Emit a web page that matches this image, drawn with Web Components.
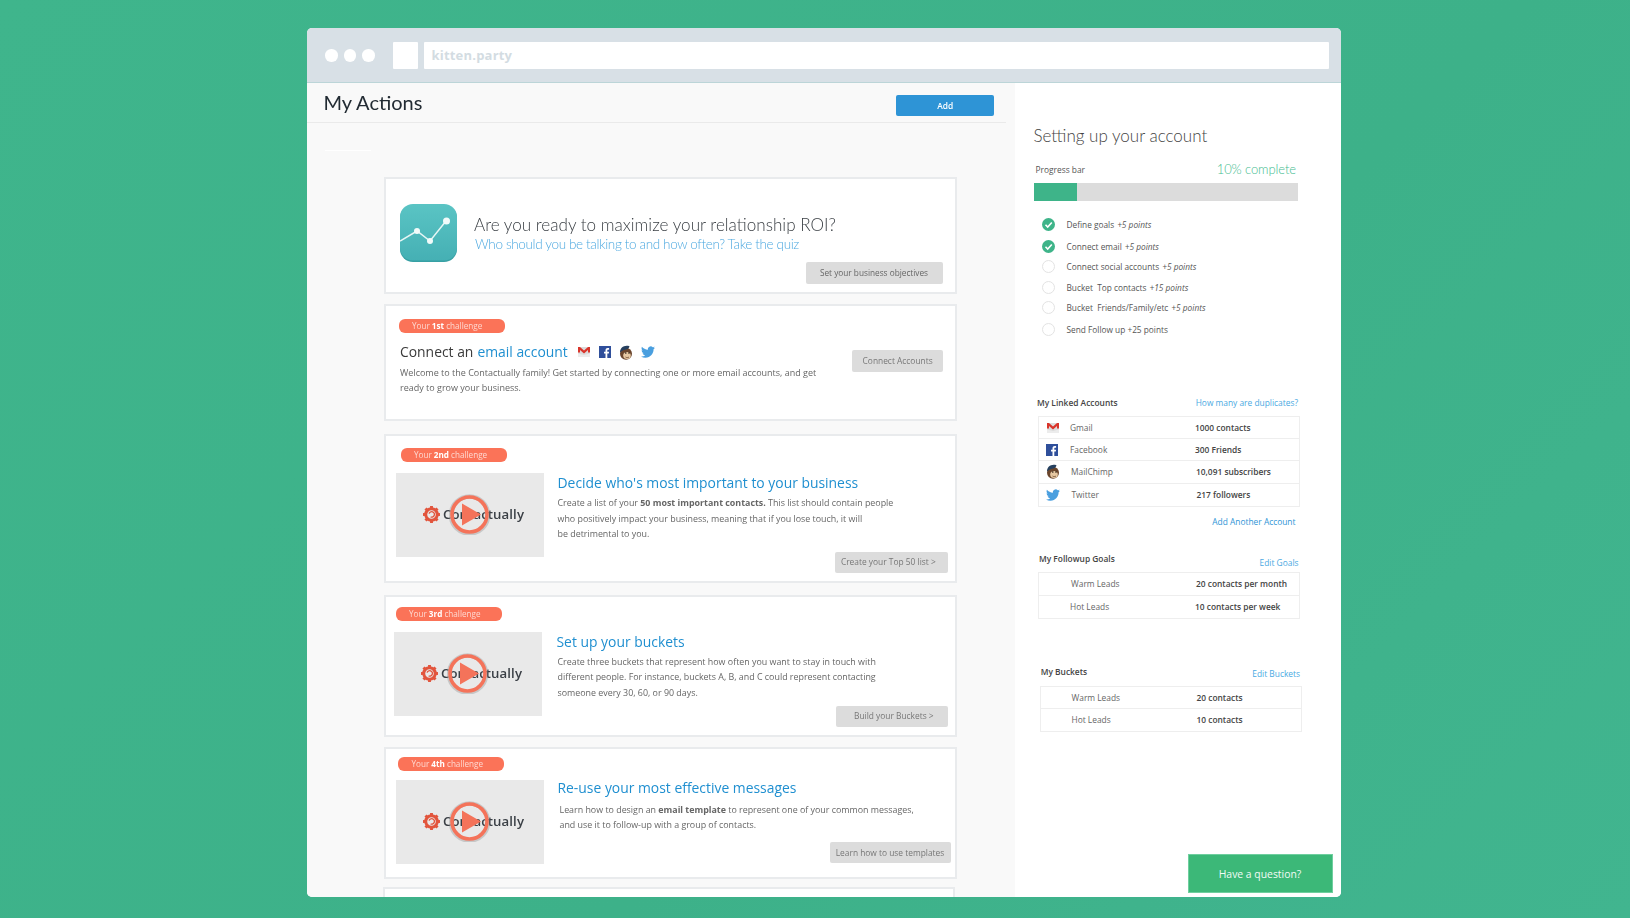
<!DOCTYPE html>
<html lang="en"><head><meta charset="utf-8"><title>My Actions</title>
<style>
html,body{margin:0;height:918px;overflow:hidden;background:linear-gradient(135deg,#3fb58c,#3db189 60%,#41b58f);font-family:"Open Sans",sans-serif}
</style></head><body>
<browser-window url="kitten.party">
  <actions-pane slot="main">
    <goal-card></goal-card>
    <connect-card></connect-card>
    <challenge-card ord="2nd" cta="Create your Top 50 list &gt;" style="--mt:13px;--h:149.3px;--pt:12.3px;--bx:15px;--vx:10.5px;--vy:1px;--gap:13.5px;--hy:1px;--by:2.3px;--bl:0px;--cy:10.7px;--cr:6.7px;--cw:113px;--cpr:6px">
      <span slot="title">Decide who's most important to your business</span>
      Create a list of your <b>50 most important contacts.</b> This list should contain people<br>who positively impact your business, meaning that if you lose touch, it will<br>be detrimental to you.
    </challenge-card>
    <challenge-card ord="3rd" cta="Build your Buckets &gt;" style="--mt:11.7px;--h:142.3px;--pt:10.3px;--bx:10px;--vx:8.5px;--vy:1px;--gap:14.5px;--hy:1px;--by:2px;--bl:1px;--cy:6px;--cr:6.7px;--cw:112px;--cpl:4px">
      <span slot="title">Set up your buckets</span>
      Create three buckets that represent how often you want to stay in touch with<br>different people. For instance, buckets A, B, and C could represent contacting<br>someone every 30, 60, or 90 days.
    </challenge-card>
    <challenge-card ord="4th" cta="Learn how to use templates" style="--mt:10px;--h:132px;--pt:8px;--bx:12.5px;--vx:10.5px;--vy:2px;--vg:7px;--gap:13.5px;--by:4px;--bl:2px;--cy:9.4px;--cr:4px;--cw:121px">
      <span slot="title">Re-use your most effective messages</span>
      Learn how to design an <b>email template</b> to represent one of your common messages,<br>and use it to follow-up with a group of contacts.
    </challenge-card>
    <empty-card></empty-card>
  </actions-pane>
  <setup-pane slot="side">
    <check-item done gap="13" text="Define goals" pts="+5 points"></check-item>
    <check-item done gap="2.5" text="Connect email" pts="+5 points"></check-item>
    <check-item gap="0" text="Connect social accounts" pts="+5 points"></check-item>
    <check-item gap="0.5" text="Bucket&nbsp; Top contacts" pts="+15 points"></check-item>
    <check-item gap="0.5" text="Bucket&nbsp; Friends/Family/etc" pts="+5 points"></check-item>
    <check-item gap="1.5" text="Send Follow up +25 points"></check-item>
    <section-head slot="tables" label="My Linked Accounts" link="How many are duplicates?" style="--sm:57px;--sl:22px;--sw:261px"></section-head>
    <info-table slot="tables" style="--tt:6px;--tl:23px">
      <info-row icon="gmail" name="Gmail" value="1000 contacts"></info-row>
      <info-row icon="fb" name="Facebook" value="300 Friends"></info-row>
      <info-row icon="chimp" name="MailChimp" value="10,091 subscribers" style="--nx:1px;--vx:1px"></info-row>
      <info-row icon="tw" name="Twitter" value="217 followers" style="--nx:1.5px;--vx:1.5px"></info-row>
    </info-table>
    <side-link slot="tables">Add Another Account</side-link>
    <section-head slot="tables" label="My Followup Goals" link="Edit Goals" style="--sm:23px;--sl:24px;--sw:259.5px;--ly:4px"></section-head>
    <info-table slot="tables" style="--tt:2px;--tl:23px">
      <info-row name="Warm Leads" value="20 contacts per month" style="--nx:1px;--vx:1px"></info-row>
      <info-row name="Hot Leads" value="10 contacts per week"></info-row>
    </info-table>
    <section-head slot="tables" label="My Buckets" link="Edit Buckets" style="--sm:45.8px;--sl:25.7px;--sw:259.3px;--ly:2px"></section-head>
    <info-table slot="tables" style="--tt:5px;--tl:24.5px">
      <info-row name="Warm Leads" value="20 contacts"></info-row>
      <info-row name="Hot Leads" value="10 contacts"></info-row>
    </info-table>
  </setup-pane>
</browser-window>
<script>
const ICONS={
gmail:`<svg viewBox="0 0 14 12" width="14" height="12"><rect x="1" y="1" width="12" height="10" fill="#dcdcdc"/><path d="M1 7.500l6 1.500 6-1.500V11H1z" fill="#ececec"/><path d="M1 1h2l4 3.600L11 1h2v5.500h-2V4L7 7.400 3 4v2.500H1z" fill="#d9352b"/></svg>`,
fb:`<svg viewBox="0 0 12 12" width="12" height="12"><rect width="12" height="12" fill="#2f4f9b"/><path d="M8.300 12V7.500h1.500l.3-1.800H8.300V4.600c0-.6.2-.9.9-.9h.9V2.100c-.3 0-.8-.1-1.300-.1-1.400 0-2.300.8-2.300 2.400v1.300H5v1.800h1.500V12z" fill="#fff"/></svg>`,
chimp:`<svg viewBox="0 0 14 15" width="14" height="15"><ellipse cx="7" cy="8.800" rx="6" ry="6" fill="#6a452c"/><ellipse cx="8" cy="10.500" rx="3.800" ry="3.600" fill="#e6c8a2"/><path d="M1 7.500C1 2.500 5.500 -.5 10.500 1.200 10 3 9 4 7.800 4.300 5.500 4.800 3 5.500 1 7.500z" fill="#26405f"/><circle cx="6.800" cy="8" r=".8" fill="#1e130b"/><circle cx="10" cy="8" r=".8" fill="#1e130b"/><path d="M6.500 12c1 .8 2.500.8 3.500 0" stroke="#6a452c" stroke-width=".8" fill="none"/></svg>`,
tw:`<svg viewBox="0 0 24 24" width="14" height="14"><path fill="#4a9fdf" d="M23.953 4.57a10 10 0 01-2.825.775 4.958 4.958 0 002.163-2.723c-.951.555-2.005.959-3.127 1.184a4.92 4.92 0 00-8.384 4.482C7.69 8.095 4.067 6.13 1.64 3.162a4.822 4.822 0 00-.666 2.475c0 1.71.87 3.213 2.188 4.096a4.904 4.904 0 01-2.228-.616v.06a4.923 4.923 0 003.946 4.827 4.996 4.996 0 01-2.212.085 4.936 4.936 0 004.604 3.417 9.867 9.867 0 01-6.102 2.105c-.39 0-.779-.023-1.17-.067a13.995 13.995 0 007.557 2.209c9.053 0 13.998-7.496 13.998-13.985 0-.21 0-.42-.015-.63A9.935 9.935 0 0024 4.59z"/></svg>`};
function def(name,css,html){
  const c=class extends HTMLElement{
    constructor(){super();this.attachShadow({mode:'open'})}
    connectedCallback(){
      const a=n=>this.getAttribute(n)??'';
      this.shadowRoot.innerHTML=`<style>${css}</style>`+(typeof html==='function'?html(a,this):html);
    }};
  customElements.define(name,c);
}
const CARD=`:host{display:block;box-sizing:border-box;width:573px;background:#fff;border:2px solid #e9ebed}`;
const GRAY=`font:8.4px/1 "Open Sans",sans-serif;color:#666;background:#dcdcdc;border-radius:2px;display:flex;align-items:center;justify-content:center;box-sizing:border-box;height:21.5px;white-space:nowrap`;

def('browser-window',`
:host{display:flex;flex-direction:column;width:1034px;height:869px;margin:28px 0 0 307px;border-radius:5px;overflow:hidden;position:relative;background:#fff;filter:blur(.35px)}
.bar{height:55px;box-sizing:border-box;background:#d8e0e6;border-bottom:1px solid #bcd5d8;display:flex;align-items:center;padding:1px 12px 0 18px;flex:none}
.dots{display:flex;gap:6px}.dots i{width:12.5px;height:12.5px;border-radius:50%;background:#fff}
.sq{width:25px;height:27px;background:#fff;border-radius:1px;margin-left:18px;flex:none}
.url{flex:1;height:27px;box-sizing:border-box;background:#fff;margin-left:6px;border-radius:1px;display:flex;align-items:center;padding:0 0 2px 8px;color:#d3dce2;font:700 13px "Open Sans",sans-serif;letter-spacing:.2px}
.body{flex:1;display:flex;min-height:0}
.main{width:708px;background:#f9f9f9;flex:none;overflow:hidden}
.side{flex:1;background:#fff;min-width:0}
.q{position:absolute;right:8.5px;bottom:4px;width:145px;height:39px;box-sizing:border-box;background:#3cb878;border:1px solid #6fcf9f;color:#f2fbf6;font:10.4px "Open Sans",sans-serif;display:flex;align-items:center;justify-content:center}
`,a=>`<div class="bar"><div class="dots"><i></i><i></i><i></i></div><div class="sq"></div><div class="url">${a('url')}</div></div>
<div class="body"><div class="main"><slot name="main"></slot></div><div class="side"><slot name="side"></slot></div></div>
<div class="q">Have a question?</div>`);

def('actions-pane',`
:host{display:block}
header{height:40px;width:699px;box-sizing:border-box;border-bottom:1.5px solid #eaeaea;display:flex;align-items:flex-start;justify-content:space-between;padding:0 12px 0 16.5px}
h1{margin:5px 0 0;font:400 20px/28px Lato,sans-serif;color:#222b33}
.add{margin-top:11.7px;width:97.6px;height:21.3px;border-radius:2px;background:#2e94d6;color:#fff;font:600 8.4px/21px "Open Sans",sans-serif;text-align:center}
.rule{width:46px;height:1px;background:#fff;margin:27px 0 0 18px}
.cards{display:block;padding:26px 0 0 76.5px}
`,`<header><h1>My Actions</h1><div class="add">Add</div></header><div class="rule"></div><div class="cards"><slot></slot></div>`);

def('goal-card',CARD+`
:host{height:117px;display:flex;padding:25px 12px 0 14.5px}
.txt{flex:1;margin-left:17px;display:flex;flex-direction:column}
h2{margin:10px 0 0;font:300 17.1px/22px Lato,sans-serif;color:#3c4146;white-space:nowrap}
p{margin:-1px 0 0 1px;font:300 13.5px/18px Lato,sans-serif;letter-spacing:-.36px;color:#4ea9e0;white-space:nowrap}
.cta{${GRAY};font-size:8.25px;align-self:flex-end;margin-top:9.2px;width:137px}
`,`<svg width="57" height="58" viewBox="0 0 57 58" style="flex:none"><defs><linearGradient id="g" x1="0" y1="0" x2="0" y2="1"><stop offset="0" stop-color="#5ac4c4"/><stop offset="1" stop-color="#45b0b4"/></linearGradient></defs><rect y="1" width="57" height="57" rx="13" fill="#37a0a4"/><rect width="57" height="56.5" rx="13" fill="url(#g)"/><path d="M0 37L17 27 30 37 46 17" fill="none" stroke="#e6f6f5" stroke-width="1.5"/><g fill="#f2fbfa"><circle cx="17" cy="27" r="3"/><circle cx="30" cy="37" r="3"/><circle cx="46.5" cy="17" r="3.5"/></g></svg>
<div class="txt"><h2>Are you ready to maximize your relationship ROI?</h2><p>Who should you be talking to and how often? Take the quiz</p><div class="cta">Set your business objectives</div></div>`);

def('challenge-badge',`
:host{display:block;width:106px;height:14px;border-radius:6px;background:#fb7358;color:rgba(255,255,255,.72);font:8.15px/14px "Open Sans",sans-serif;padding-left:13.5px;box-sizing:border-box;white-space:nowrap}
b{color:#fff;font-weight:700}`,a=>`Your <b>${a('ord')}</b> challenge`);

def('connect-card',CARD+`
:host{margin-top:10px;height:116.7px;display:flex;padding:13px 11.7px 0 13px}
.l{flex:1}
h2{margin:9px 0 0 1.5px;font:400 13.9px/20px "Open Sans",sans-serif;color:#3a3a3a;display:flex;align-items:center;white-space:nowrap}
h2 a{color:#1f8fd0;margin-left:4px}
.ic{display:flex;align-items:center;gap:8px;margin-left:9px}
p{margin:2.9px 0 0 1.5px;font:400 9px/15.3px "Open Sans",sans-serif;color:#666}
.cta{${GRAY};width:90.4px;margin-top:31px;color:#777;flex:none}
`,`<div class="l"><challenge-badge ord="1st"></challenge-badge><h2>Connect an <a>email account</a><span class="ic">${ICONS.gmail}${ICONS.fb}${ICONS.chimp}${ICONS.tw}</span></h2><p>Welcome to the Contactually family! Get started by connecting one or more email accounts, and get<br>ready to grow your business.</p></div><div class="cta">Connect Accounts</div>`);

def('video-thumb',`
:host{display:flex;align-items:center;position:relative;width:148px;height:84px;background:#e9e9e9;flex:none;padding:0 0 0 26.5px;box-sizing:border-box;color:#3a3f45;font:600 13.2px "Open Sans",sans-serif}
span{margin:-2px 0 0 3.5px;letter-spacing:.1px}
.p{position:absolute;left:52.5px;top:21.5px}`,
`<svg width="17" height="17" viewBox="-10 -10 20 20" style="flex:none"><g fill="#e2553d"><circle r="6.8" fill="none" stroke="#e2553d" stroke-width="3.5"/><rect x="-1.7" y="-10" width="3.4" height="4"/><rect x="-1.7" y="6" width="3.4" height="4"/><rect x="-10" y="-1.7" width="4" height="3.4"/><rect x="6" y="-1.7" width="4" height="3.4"/><rect x="-1.7" y="-10" width="3.4" height="4" transform="rotate(45)"/><rect x="-1.7" y="6" width="3.4" height="4" transform="rotate(45)"/><rect x="-10" y="-1.7" width="4" height="3.4" transform="rotate(45)"/><rect x="6" y="-1.7" width="4" height="3.4" transform="rotate(45)"/><path d="M-2.8 -1A3.2 3.2 0 1 1 -1 2.8" fill="none" stroke="#e2553d" stroke-width="1.6"/></g></svg><span>Contactually</span>
<svg class="p" width="41" height="41" viewBox="0 0 41 41"><circle cx="20.5" cy="21" r="18.5" fill="none" stroke="#8a8a8a" stroke-opacity=".35" stroke-width="4.5"/><circle cx="20.5" cy="20.5" r="17.5" fill="none" stroke="#f4735a" stroke-width="3.6"/><path d="M13 9.5L32 20.5 13 31.5z" fill="#f4735a"/></svg>`);

def('challenge-card',CARD+`
:host{margin-top:var(--mt);height:var(--h);padding-top:var(--pt);display:block}
challenge-badge{margin-left:var(--bx)}
.row{display:flex;margin-top:var(--vg,10px);padding-left:var(--vx)}
video-thumb{margin-top:var(--vy)}
.t{margin-left:var(--gap);display:flex;flex-direction:column;flex:1;min-width:0}
h3{margin:var(--hy,0) 0 0;font:400 13.9px/20px "Open Sans",sans-serif;color:#1f8fd0;white-space:nowrap}
p{margin:var(--by) 0 0 var(--bl);font:400 8.9px/15.3px "Open Sans",sans-serif;color:#666;white-space:nowrap}
.cta{${GRAY};align-self:flex-end;margin:var(--cy) var(--cr) 0 0;width:var(--cw);color:#777;padding:0 var(--cpr,0) 0 var(--cpl,0)}
`,a=>`<challenge-badge ord="${a('ord')}"></challenge-badge><div class="row"><video-thumb></video-thumb><div class="t"><h3><slot name="title"></slot></h3><p><slot></slot></p><div class="cta">${a('cta')}</div></div></div>`);

def('empty-card',`:host{display:block;box-sizing:border-box;width:572px;height:30px;margin:8px 0 0 -1px;background:#fff;border:2px solid #e9ebed}`,``);

def('check-item',`
:host{display:flex;align-items:center;height:20px;margin-left:27px;font:8.3px "Open Sans",sans-serif;color:#555;white-space:nowrap}
.c{width:13px;height:13px;flex:none;margin-right:11.5px;border-radius:50%;box-sizing:border-box;border:1.5px solid #e3e3e3;background:#fff;display:block}
:host([done]) .c{background:#3eb489;border:0}
em{font-style:italic;margin-left:3px}
`,(a,el)=>{el.style.marginTop=a('gap')+'px';return `<svg class="c" viewBox="0 0 13 13">${el.hasAttribute('done')?'<path d="M3.5 6.8L5.7 9 9.8 4.5" fill="none" stroke="#fff" stroke-width="1.6"/>':''}</svg><span>${a('text')}${a('pts')?`<em>${a('pts')}</em>`:''}</span>`});

def('setup-pane',`
:host{display:block;padding-top:41px}
h2{margin:0 0 0 18.5px;font:300 17px/24px Lato,sans-serif;color:#444;white-space:nowrap}
.pr{display:flex;justify-content:space-between;align-items:flex-start;height:20px;margin:13px 0 0 20.5px;width:260.5px;font:8.4px/18px "Open Sans",sans-serif;color:#555}
.pr b{font:300 13px/16px Lato,sans-serif;letter-spacing:-.1px;color:#45bd90}
.bar{margin:2px 0 0 19px;width:263.5px;height:18px;background:#dcdcdc}
.bar i{display:block;width:43px;height:100%;background:#3eb489}
`,`<h2>Setting up your account</h2><div class="pr"><span>Progress bar</span><b>10% complete</b></div><div class="bar"><i></i></div><slot></slot><slot name="tables"></slot>`);

def('section-head',`
:host{display:flex;justify-content:space-between;margin:var(--sm) 0 0 var(--sl);width:var(--sw);font:600 8.4px/14px "Open Sans",sans-serif;color:#444;white-space:nowrap}
a{font-weight:400;color:#4aa9e2;padding-top:var(--ly,0)}`,a=>`<span>${a('label')}</span><a>${a('link')}</a>`);

def('info-table',`:host{display:block;box-sizing:border-box;width:262px;margin:var(--tt) 0 0 var(--tl);background:#fff;border:1.5px solid #eeeeee;font:8.4px "Open Sans",sans-serif;color:#666}`,`<slot></slot>`);

def('info-row',`
:host{display:flex;align-items:center;height:22.2px;box-sizing:border-box;border-bottom:1.5px solid #eeeeee;white-space:nowrap}
:host(:last-child){border-bottom:0}
.i{width:31px;padding-left:7px;box-sizing:border-box;flex:none;display:flex;align-items:center}
.n{width:125px;margin-left:var(--nx,0);flex:none}
.v{font-weight:600;color:#444;margin-left:calc(var(--vx,0px) - var(--nx,0px))}
`,a=>`<div class="i">${ICONS[a('icon')]||''}</div><div class="n">${a('name')}</div><div class="v">${a('value')}</div>`);

def('side-link',`:host{display:block;width:280.5px;text-align:right;margin-top:8.6px;font:8.4px/14px "Open Sans",sans-serif;color:#2e94d6}`,`<slot></slot>`);
</script>
</body></html>
